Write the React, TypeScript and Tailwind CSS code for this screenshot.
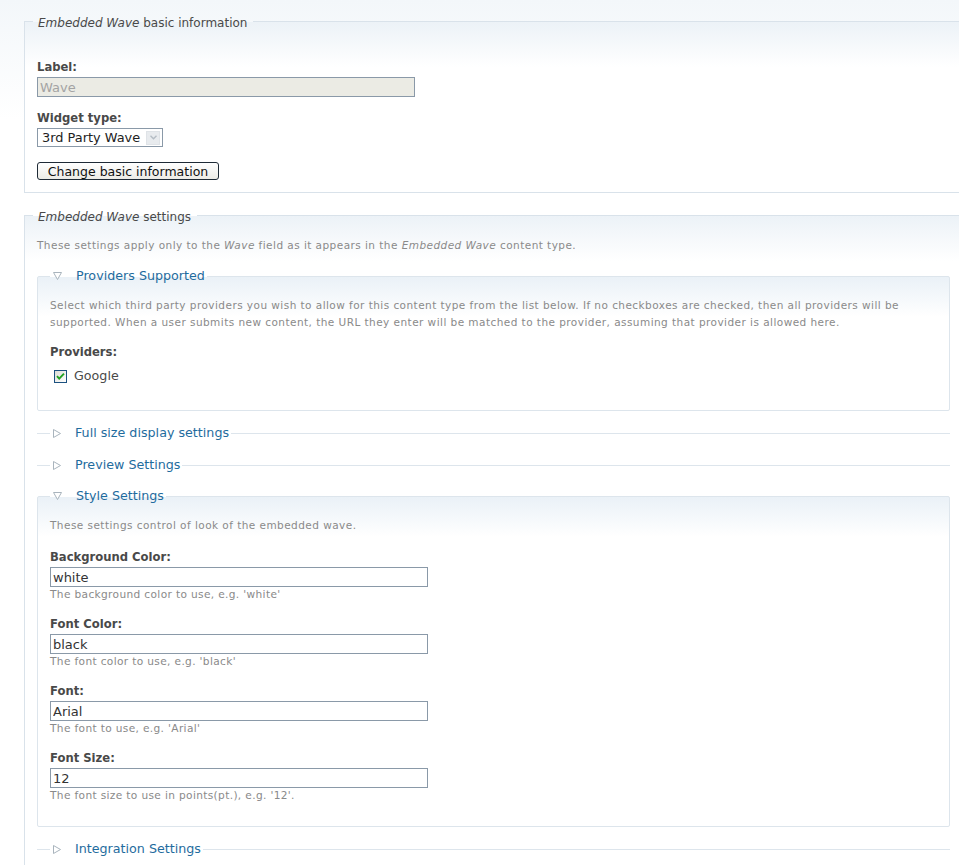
import React from "react";

const F = "font-['DejaVu_Sans',Verdana,sans-serif]";

function Tri({ open }: { open: boolean }) {
  return open ? (
    <svg width="9" height="8" viewBox="0 0 9 8" className="shrink-0">
      <path d="M0.5 0.5H8.5L4.5 7.5Z" fill="#ffffff" stroke="#a9b4bd" strokeWidth="1" />
    </svg>
  ) : (
    <svg width="8" height="9" viewBox="0 0 8 9" className="shrink-0">
      <path d="M0.5 0.5V8.5L7.5 4.5Z" fill="#ffffff" stroke="#a9b4bd" strokeWidth="1" />
    </svg>
  );
}

function InnerLegend({ title }: { title: string }) {
  return (
    <legend className="flex h-[18px] items-center pr-[2px]">
      <span className="ml-[3px]">
        <Tri open />
      </span>
      <span className="ml-[14px] text-[12.7px] leading-[18px] text-[#1f6c9e]">{title}</span>
    </legend>
  );
}

function Collapsed({ title, mt }: { title: string; mt: string }) {
  return (
    <fieldset className={`${mt} w-[913px] border-t border-[#dde5ec] pl-[13px]`}>
      <legend className="flex h-[18px] items-center pr-[2px]">
        <span className="ml-[3px]">
          <Tri open={false} />
        </span>
        <span className="ml-[14px] text-[12.7px] leading-[18px] text-[#1f6c9e]">{title}</span>
      </legend>
    </fieldset>
  );
}

const LBL = "text-[11.6px] font-bold leading-[18px] text-[#494949]";
const DESC = "text-[10.6px] leading-[14px] tracking-[0.35px] text-[#8a8a8a]";
const FDESC = "text-[10.5px] leading-[17px] tracking-[0.45px] text-[#8a8a8a]";
const OUTLEG = "-ml-[4px] h-[18px] pl-[5px] pr-[6px] pt-[4px] text-[12px] leading-[14px] text-[#494949]";

function TextItem({ label, value, desc, last }: { label: string; value: string; desc: string; last?: boolean }) {
  return (
    <div className={last ? "" : "mb-[14px]"}>
      <div className={LBL}>{label}</div>
      <input
        readOnly
        value={value}
        className={`${F} mt-[1px] block h-[20px] w-[378px] border border-[#8a99a8] bg-white px-[2px] text-[13px] text-[#333333] outline-none`}
      />
      <div className={DESC}>{desc}</div>
    </div>
  );
}

export default function App() {
  return (
    <div className={`${F} min-h-[865px] w-full overflow-hidden bg-[linear-gradient(to_bottom,#f3f7fa,#ffffff_120px)] pl-[24px] pt-[12px] text-[#494949]`}>
      {/* Fieldset 1 */}
      <fieldset className="w-[960px] border border-[#d9e2ea] bg-[linear-gradient(to_bottom,#ecf2f7,#ffffff_45px)] px-[12px] pb-[12px]">
        <legend className={OUTLEG}>
          <em>Embedded Wave</em> basic information
        </legend>
        <div className="pt-[28px]">
          <div className={LBL}>Label:</div>
          <input
            readOnly
            value="Wave"
            className={`${F} mt-[1px] block h-[20px] w-[378px] border border-[#8a99a8] bg-[#ebebe4] px-[2px] text-[13px] text-[#a3a3a3] outline-none`}
          />
          <div className={`mt-[12px] ${LBL}`}>Widget type:</div>
          <div className="mt-[1px] flex h-[19px] w-[126px] items-center border border-[#8a99a8] bg-white pl-[4px] pr-[2px]">
            <span className="flex-1 whitespace-nowrap text-[12.9px] leading-[17px] text-[#222222]">3rd Party Wave</span>
            <span className="flex h-[14px] w-[14px] items-center justify-center border border-[#dfe3e7] bg-[#e8ebee]">
              <svg width="7" height="5" viewBox="0 0 7 5">
                <path d="M0.5 0.8L3.5 3.8L6.5 0.8" fill="none" stroke="#b4bcc4" strokeWidth="1.4" />
              </svg>
            </span>
          </div>
          <button className="mt-[15px] block h-[18px] w-[182px] rounded-[3px] border border-[#1e2a36] bg-[linear-gradient(to_bottom,#ffffff,#ecebe6)] text-[12.5px] leading-[15px] text-[#111111]">
            Change basic information
          </button>
        </div>
      </fieldset>

      {/* Fieldset 2 */}
      <fieldset className="mt-[13px] w-[960px] border border-b-0 border-[#d9e2ea] bg-[linear-gradient(to_bottom,#ecf2f7,#ffffff_45px)] px-[12px] pb-[40px]">
        <legend className={OUTLEG}>
          <em>Embedded Wave</em> settings
        </legend>
        <div className={`pt-[13px] ${FDESC}`}>
          These settings apply only to the <em>Wave</em> field as it appears in the <em>Embedded Wave</em> content type.
        </div>

        {/* Providers Supported */}
        <fieldset className="mt-[13px] w-[913px] rounded-[2px] border border-[#dde5ec] bg-[linear-gradient(to_bottom,#eaf1f7,#ffffff_40px)] px-[12px] pb-[25px]">
          <InnerLegend title="Providers Supported" />
          <div className={`pt-[12px] ${FDESC}`}>
            Select which third party providers you wish to allow for this content type from the list below. If no checkboxes are checked, then all providers will be supported. When a user submits new content, the URL they enter will be matched to the provider, assuming that provider is allowed here.
          </div>
          <div className={`mt-[12px] ${LBL}`}>Providers:</div>
          <div className="mt-[6px] flex h-[18px] items-center">
            <svg width="13" height="13" viewBox="0 0 13 13" className="ml-[4px] shrink-0">
              <defs>
                <linearGradient id="cbg" x1="0" y1="0" x2="1" y2="1">
                  <stop offset="0" stopColor="#dcdcd6" />
                  <stop offset="1" stopColor="#ffffff" />
                </linearGradient>
              </defs>
              <rect x="0.5" y="0.5" width="12" height="12" fill="#f4f4f0" stroke="#1c5180" />
              <rect x="1" y="1" width="11" height="11" fill="url(#cbg)" />
              <path d="M3 6.2L5.2 8.6L10 3.6" fill="none" stroke="#21a121" strokeWidth="1.9" />
            </svg>
            <span className="ml-[7px] text-[12.7px] leading-[18px] text-[#494949]">Google</span>
          </div>
        </fieldset>

        <Collapsed title="Full size display settings" mt="mt-[13px]" />
        <Collapsed title="Preview Settings" mt="mt-[14px]" />

        {/* Style Settings */}
        <fieldset className="mt-[13px] w-[913px] rounded-[2px] border border-[#dde5ec] bg-[linear-gradient(to_bottom,#eaf1f7,#ffffff_40px)] px-[12px] pb-[24px]">
          <InnerLegend title="Style Settings" />
          <div className={`pt-[12px] ${FDESC}`}>These settings control of look of the embedded wave.</div>
          <div className="mt-[14px]">
            <TextItem label="Background Color:" value="white" desc="The background color to use, e.g. 'white'" />
            <TextItem label="Font Color:" value="black" desc="The font color to use, e.g. 'black'" />
            <TextItem label="Font:" value="Arial" desc="The font to use, e.g. 'Arial'" />
            <TextItem label="Font Size:" value="12" desc="The font size to use in points(pt.), e.g. '12'." last />
          </div>
        </fieldset>

        <Collapsed title="Integration Settings" mt="mt-[13px]" />
      </fieldset>
    </div>
  );
}
